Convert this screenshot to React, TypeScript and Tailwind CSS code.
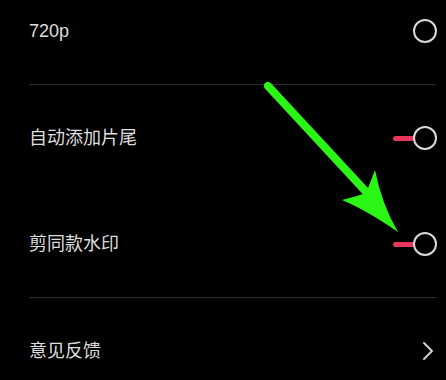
import React from "react";

function Radio() {
    return <span className="block h-[24px] w-[24px] rounded-full border-2 border-[#d9d9d9]" />;
}

function Toggle() {
    return (
        <span className="flex items-center">
            <span className="h-[5px] w-[22px] rounded-full bg-[#e8375a]" />
            <span className="-ml-[2px] block h-[24px] w-[24px] rounded-full border-2 border-[#d9d9d9]" />
        </span>
    );
}

function Chevron() {
    return (
        <svg width="12" height="20" viewBox="0 0 12 20" fill="none">
            <path d="M2 2l8 8-8 8" stroke="#d0d0d0" strokeWidth="2" strokeLinecap="round" strokeLinejoin="round" />
        </svg>
    );
}

function Row({ label, right }: { label: string; right: React.ReactNode }) {
    return (
        <div className="flex h-[106px] items-center justify-between pl-[29px] pr-[9px]">
            <span className="text-[18px] text-[#dedede]">{label}</span>
            {right}
        </div>
    );
}

const Divider = () => <div className="ml-[29px] mr-[10px] h-px bg-[#2e2e2e]" />;

export default function App() {
    return (
        <div
            className="relative h-[380px] w-[446px] overflow-hidden bg-black"
            style={{ fontFamily: '"Liberation Sans", "Noto Sans CJK SC", sans-serif' }}
        >
            <div className="-mt-[22px] flex flex-col">
                <Row label="720p" right={<Radio />} />
                <Divider />
                <Row label="自动添加片尾" right={<Toggle />} />
                <Row label="剪同款水印" right={<Toggle />} />
                <Divider />
                <Row label="意见反馈" right={<span className="pr-[3px]"><Chevron /></span>} />
            </div>

            {/* green annotation arrow */}
            <svg className="pointer-events-none absolute left-0 top-0" width="446" height="380" viewBox="0 0 446 380">
                <line x1="268" y1="86" x2="370" y2="196" stroke="#2bf514" strokeWidth="8" strokeLinecap="round" />
                <path d="M398 232 Q366 210 342 200 Q358 196 366 193 Q370 183 375 170 Q382 205 398 232 Z" fill="#2bf514" />
            </svg>
        </div>
    );
}
